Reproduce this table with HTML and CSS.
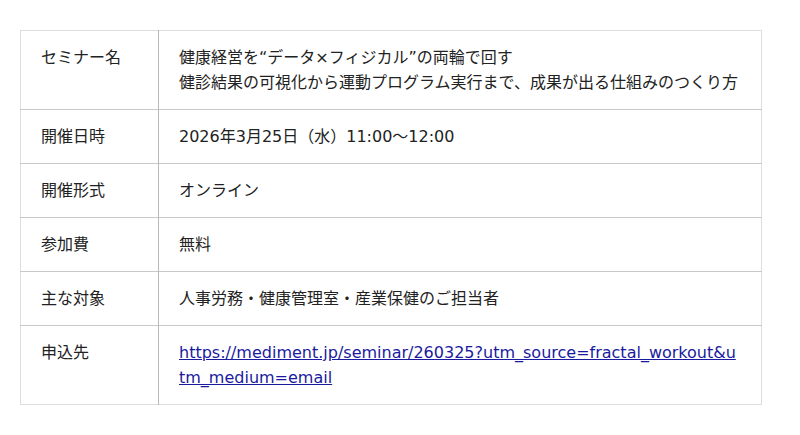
FILE: index.html
```html
<!DOCTYPE html>
<html lang="ja">
<head>
<meta charset="utf-8">
<link rel="stylesheet" href="styles.css">
</head>
<body>
<table class="info">
  <tr><th>セミナー名</th><td>健康経営を“データ×フィジカル”の両輪で回す<br>健診結果の可視化から運動プログラム実行まで、成果が出る仕組みのつくり方</td></tr>
  <tr><th>開催日時</th><td>2026年3月25日（水）11:00〜12:00</td></tr>
  <tr><th>開催形式</th><td>オンライン</td></tr>
  <tr><th>参加費</th><td>無料</td></tr>
  <tr><th>主な対象</th><td>人事労務・健康管理室・産業保健のご担当者</td></tr>
  <tr><th>申込先</th><td><a class="link" href="#">https://mediment.jp/seminar/260325?utm_source=fractal_workout&amp;utm_medium=email</a></td></tr>
</table>
</body>
</html>
```
FILE: styles.css
```css
html, body {
  margin: 0;
  background: #fff;
}
body {
  padding: 30px 20px;
  font-family: "DejaVu Sans", "Noto Sans CJK JP", sans-serif;
  font-size: 16px;
  color: #222;
}
.info {
  width: 742px;
  border-collapse: collapse;
  border: 1px solid #ddd;
}
.info th, .info td {
  padding: 14px 20px;
  line-height: 25px;
  text-align: left;
  vertical-align: top;
  font-weight: normal;
  border-top: 1px solid #c8c8c8;
}
.info tr:first-child th, .info tr:first-child td {
  border-top: 1px solid #ddd;
}
.info th {
  width: 97px;
  border-right: 1px solid #b8b8b8;
}
.info td {
  word-break: break-all;
}
.link {
  color: #1a1a9e;
}
```
